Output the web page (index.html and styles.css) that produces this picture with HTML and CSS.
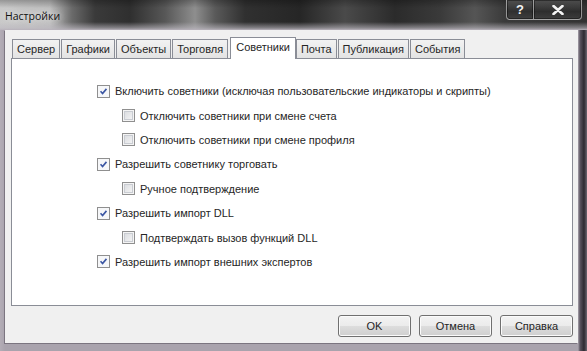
FILE: index.html
```html
<!DOCTYPE html>
<html lang="ru">
<head>
  <meta charset="UTF-8" />
  <title>Настройки</title>
  <link rel="stylesheet" href="styles.css">
</head>
<body>
  <div class="window">

    <div class="titlebar">
      <span class="title">Настройки</span>
      <div class="caption-buttons">
        <div class="cap-btn help">?</div>
        <div class="cap-btn close">
          <svg viewBox="0 0 12 10" width="12" height="10">
            <path d="M1.5 1 L10.5 9 M10.5 1 L1.5 9" />
          </svg>
        </div>
      </div>
    </div>

    <div class="dialog">
      <div class="tabs">
        <div class="tab">Сервер</div>
        <div class="tab">Графики</div>
        <div class="tab">Объекты</div>
        <div class="tab">Торговля</div>
        <div class="tab active">Советники</div>
        <div class="tab">Почта</div>
        <div class="tab">Публикация</div>
        <div class="tab">События</div>
      </div>

      <div class="panel">
        <div class="option">
          <span class="check checked"><svg viewBox="0 0 13 13"><path d="M3 6.3 L5.4 9 L10 3.4" /></svg></span>
          Включить советники (исключая пользовательские индикаторы и скрипты)
        </div>
        <div class="option sub">
          <span class="check"></span>
          Отключить советники при смене счета
        </div>
        <div class="option sub">
          <span class="check"></span>
          Отключить советники при смене профиля
        </div>
        <div class="option">
          <span class="check checked"><svg viewBox="0 0 13 13"><path d="M3 6.3 L5.4 9 L10 3.4" /></svg></span>
          Разрешить советнику торговать
        </div>
        <div class="option sub">
          <span class="check"></span>
          Ручное подтверждение
        </div>
        <div class="option">
          <span class="check checked"><svg viewBox="0 0 13 13"><path d="M3 6.3 L5.4 9 L10 3.4" /></svg></span>
          Разрешить импорт DLL
        </div>
        <div class="option sub">
          <span class="check"></span>
          Подтверждать вызов функций DLL
        </div>
        <div class="option">
          <span class="check checked"><svg viewBox="0 0 13 13"><path d="M3 6.3 L5.4 9 L10 3.4" /></svg></span>
          Разрешить импорт внешних экспертов
        </div>
      </div>

      <div class="buttons">
        <button class="btn">OK</button>
        <button class="btn">Отмена</button>
        <button class="btn">Справка</button>
      </div>
    </div>

  </div>
</body>
</html>
```

FILE: styles.css
```css
* {
  box-sizing: border-box;
}

body {
  margin: 0;
  font-family: 'Liberation Sans', Arial, sans-serif;
  font-size: 11px;
  color: #262626;
  background: #2c2a2e;
}

.window {
  width: 587px;
  height: 351px;
  display: flex;
  flex-direction: column;
  background: linear-gradient(90deg, #b3adb6 0, #a9a3ad 5px, #a9a3ad 578px, #5b5560 580px, #2e2a31 584px, #6d6671 587px);
  overflow: hidden;
}

/* aero glass caption */
.titlebar {
  height: 30px;
  flex: none;
  display: flex;
  align-items: flex-start;
  justify-content: space-between;
  background:
    linear-gradient(180deg, rgba(0,0,0,0.25) 0, rgba(0,0,0,0) 8px, rgba(0,0,0,0) 22px, rgba(190,186,194,0.6) 28px, #b8b2bb 30px),
    linear-gradient(90deg, #c9c9c9 0, #bcbcbc 50px, #6a6a6a 72px, #3a3a3a 95px, #2f2f2f 130px, #575757 165px, #8e8e8e 195px, #5a5a5a 215px, #303030 245px, #262626 300px, #4a4a4a 345px, #2b2b2b 395px, #3a3a3a 440px, #555 475px, #3a3a3a 505px, #333 587px);
}

.title {
  margin: 9px 0 0 5px;
  font-family: 'Open Sans', 'Liberation Sans', sans-serif;
  font-size: 10.5px;
  color: #111;
  text-shadow: 0 0 6px #e8e8e8, 0 0 10px #e0e0e0;
}

.caption-buttons {
  display: flex;
  margin-right: 5px;
}

.cap-btn {
  height: 20px;
  display: flex;
  align-items: center;
  justify-content: center;
  color: #f4f4f4;
  border: 1px solid rgba(230,230,230,0.55);
  border-top: none;
  background: linear-gradient(180deg, rgba(110,110,110,0.55), rgba(40,40,40,0.55) 60%, rgba(70,70,70,0.5));
  box-shadow: inset 0 0 0 1px rgba(0,0,0,0.4);
}

.help {
  width: 27px;
  border-radius: 0 0 0 4px;
  font-weight: bold;
  font-size: 13px;
  border-right: none;
}

.close {
  width: 49px;
  border-radius: 0 0 4px 0;
}

.close svg path {
  stroke: #f4f4f4;
  stroke-width: 2.6;
  stroke-linecap: round;
}

.dialog {
  flex: 1;
  margin: 0 9px 8px 5px;
  background: #f0f0f0;
  padding-top: 7px;
  display: flex;
  flex-direction: column;
  box-shadow: -1px 1px 0 #7b7580;
}

.tabs {
  display: flex;
  align-items: flex-end;
  height: 22px;
  margin: 0 0 -1px 7px;
  position: relative;
  z-index: 1;
}

.tab {
  height: 19px;
  padding: 3px 4px 0;
  border: 1px solid #8a8d96;
  border-bottom: none;
  background: linear-gradient(180deg, #f2f2f2, #e3e3e3);
  white-space: nowrap;
  margin-bottom: 1px;
}

.tab + .tab {
  margin-left: 1px;
}

.tab.active {
  height: 22px;
  padding: 3px 5px 0;
  margin: 0 0 0 2px;
  background: #fff;
}

.tab.active + .tab {
  margin-left: 0;
}

.panel {
  height: 248px;
  margin: 0 5px 0 6px;
  background: #fff;
  border: 1px solid #8a8d96;
  padding: 20px 0 0 85px;
}

.option {
  height: 24.4px;
  display: flex;
  align-items: center;
  gap: 5px;
  white-space: nowrap;
}

.option.sub {
  padding-left: 25px;
}

.check {
  width: 13px;
  height: 13px;
  flex: none;
  border: 1px solid #8f8f8f;
  background: linear-gradient(135deg, #d6d8dc, #f8f8f8);
  box-shadow: inset 0 0 0 1px #f4f4f4, inset 0 0 0 2px #c9ccd2;
}

.check.checked {
  background: #f6f7f9;
  box-shadow: none;
}

.check svg {
  display: block;
  width: 11px;
  height: 11px;
}

.check svg path {
  fill: none;
  stroke: #3b56a3;
  stroke-width: 1.9;
}

.buttons {
  display: flex;
  justify-content: flex-end;
  gap: 8px;
  margin: 9px 5px 0 0;
}

.btn {
  width: 73px;
  height: 22px;
  font-family: 'Liberation Sans', Arial, sans-serif;
  font-size: 11px;
  color: #262626;
  border: 1px solid #707070;
  border-radius: 3px;
  background: linear-gradient(180deg, #f3f3f3 0, #ebebeb 50%, #dddddd 51%, #cfcfcf 100%);
  box-shadow: inset 0 0 0 1px #fbfbfb;
  padding: 0;
}
```
